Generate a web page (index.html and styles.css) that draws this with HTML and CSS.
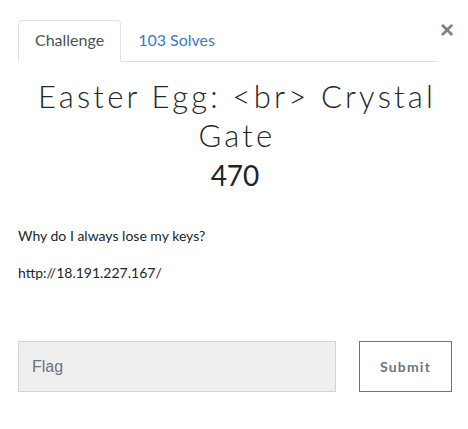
FILE: index.html
```html
<!DOCTYPE html>
<html>
<head>
<meta charset="utf-8">
<link rel="stylesheet" href="styles.css">
</head>
<body>
<div class="modal">
  <div class="top">
    <ul class="tabs">
      <li class="tab active">Challenge</li>
      <li class="tab">103 Solves</li>
    </ul>
    <button class="close">&times;</button>
  </div>
  <h3 class="name">Easter Egg: &lt;br&gt; Crystal Gate</h3>
  <h4 class="value">470</h4>
  <div class="desc">
    <p>Why do I always lose my keys?</p>
    <p>http://18.191.227.167/</p>
  </div>
  <form class="submit-row">
    <input class="flag" type="text" placeholder="Flag">
    <button class="btn" type="button">Submit</button>
  </form>
</div>
</body>
</html>
```
FILE: styles.css
```css
* { box-sizing: border-box; }
html, body { margin: 0; padding: 0; background: #fff; }
body { font-family: "Lato", "Liberation Sans", sans-serif; color: #212529; }
.modal { width: 468px; height: 429px; padding: 20px 16px 0 18px; }
.top { display: flex; align-items: flex-start; }
.tabs {
  list-style: none; margin: 0; padding: 0; display: flex; flex: 1;
  border-bottom: 1px solid #dee2e6;
}
.tab {
  font-size: 16px; line-height: 24px; padding: 7px 16px 9px;
  color: #3a7bbf; border: 1px solid transparent;
  border-top-left-radius: 4px; border-top-right-radius: 4px;
  margin-bottom: -1px;
}
.tab.active { color: #495057; border-color: #dee2e6 #dee2e6 #fff; background: #fff; }
.close {
  background: none; border: 0; padding: 0; margin: -1px 0 0 2px;
  font-family: "Liberation Sans", sans-serif; font-weight: 700;
  font-size: 24px; line-height: 22px; color: #808080; width: 12px;
}
.name {
  margin: 15px 0 0; text-align: center; font-family: "Lato", sans-serif;
  font-weight: 300; font-size: 31px; line-height: 39px; letter-spacing: 3.2px;
  color: #212529; padding: 0 0 0 4px;
}
.value {
  margin: 3px 0 0; text-align: center; font-weight: 400; font-size: 28px;
  line-height: 34px; color: #212529;
}
.desc { margin-top: 33px; font-size: 14px; line-height: 21px; }
.desc p { margin: 0 0 16px; }
.submit-row { display: flex; gap: 23px; margin-top: 58px; align-items: flex-start; }
.flag {
  width: 318px; height: 51px; background: #efefef; border: 1px solid #ced4da;
  padding: 0 13px; font-family: "Liberation Sans", sans-serif; font-size: 16px;
  color: #495057; outline: none;
}
.flag::placeholder { color: #6c757d; }
.btn {
  width: 93px; height: 51px; background: #fff; border: 1px solid #6c757d;
  font-family: "Lato", sans-serif; font-weight: 700; font-size: 14px;
  letter-spacing: 1.2px; color: #6c757d; padding: 0;
}
```
